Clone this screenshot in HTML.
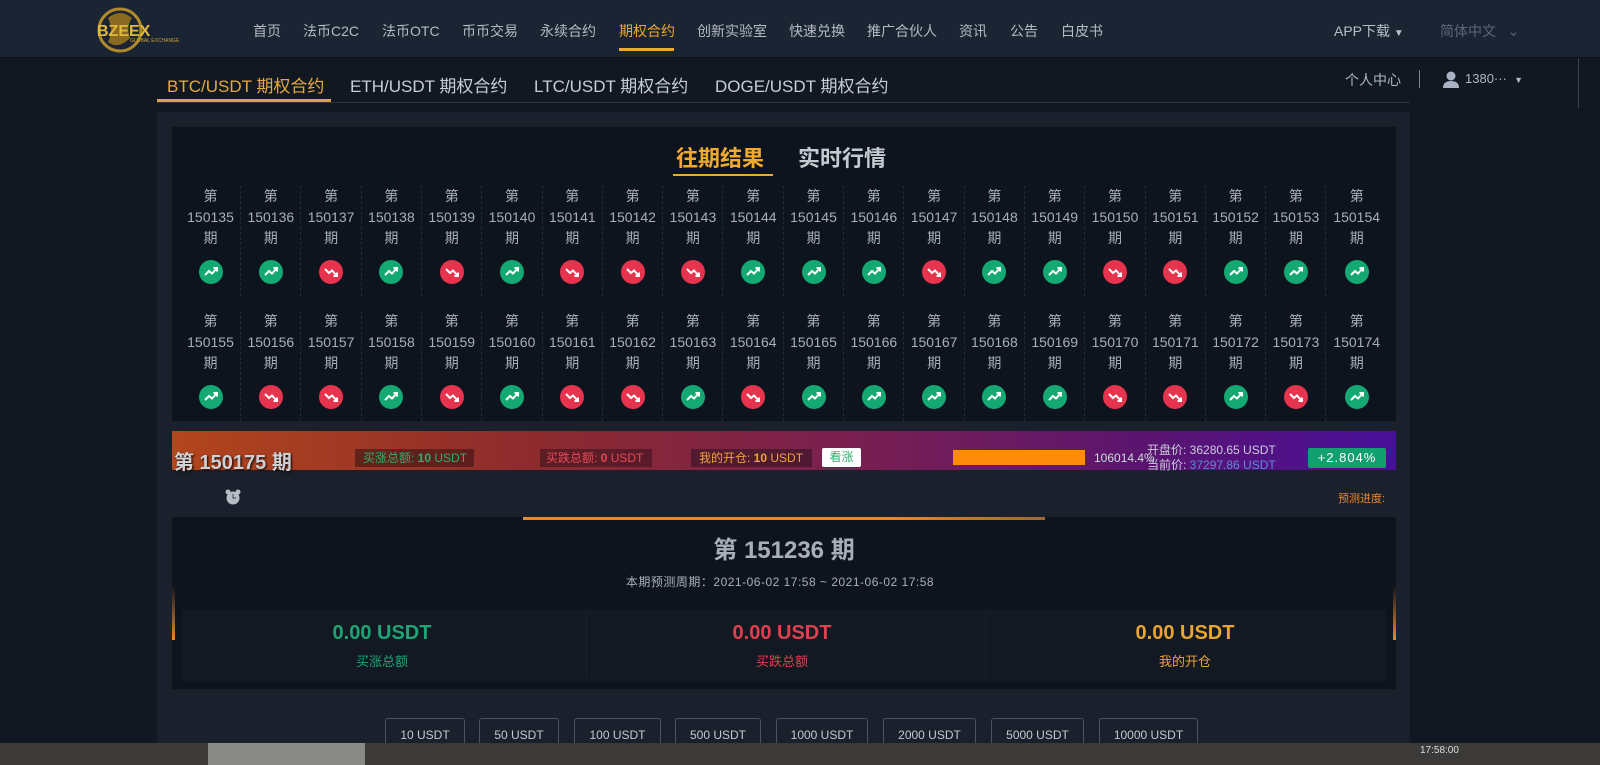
<!DOCTYPE html>
<html><head><meta charset="utf-8">
<style>
*{margin:0;padding:0;box-sizing:border-box}
body{width:1600px;height:765px;overflow:hidden;background:#111822;font-family:"Liberation Sans","Noto Sans CJK SC",sans-serif;position:relative;color:#c8ccd4}
.a{position:absolute}
.hdr{left:0;top:0;width:1600px;height:58px;background:#1b2433;border-bottom:1px solid #0c1118}
.nav{top:21px;font-size:14px;color:#b4bac6}
.nav span{position:absolute;white-space:nowrap}
.cont{left:157px;top:112px;width:1253px;height:640px;background:#1a212d}
.panel{left:172px;top:127px;width:1224px;height:294px;background:#0e141d}
.cell{position:absolute;width:60px;text-align:center;font-size:14px;line-height:21px;color:#a9aeb8;border-right:1px dashed #232b38;height:110px}
.ic{display:block;width:24px;height:24px;border-radius:50%;margin:11px auto 0}
.u{background:#14a872}.d{background:#e6334e}
.btn{position:absolute;top:718px;height:30px;border:1px solid #4a5363;border-bottom:none;border-radius:3px 3px 0 0;font-size:12px;color:#c4c8d0;text-align:center;line-height:32px}
</style></head><body>
<svg width="0" height="0" style="position:absolute"><defs>
<symbol id="up" viewBox="0 0 24 24"><path d="M6 15 L10 11 L13 13.5 L18 8 M14.5 8 H18 V11.5" fill="none" stroke="#fff" stroke-width="2"/></symbol>
<symbol id="dn" viewBox="0 0 24 24"><path d="M6 9 L10 13 L13 10.5 L18 16 M14.5 16 H18 V12.5" fill="none" stroke="#fff" stroke-width="2"/></symbol>
</defs></svg>
<div class="a hdr"></div>
<svg class="a" style="left:96px;top:4px" width="100" height="52" viewBox="0 0 100 52">
<circle cx="24" cy="26" r="21" fill="none" stroke="#b08a2a" stroke-width="3"/>
<path d="M12 14 Q24 4 36 14 Q30 22 34 34 Q22 46 12 38 Q18 26 12 14Z" fill="#8a6a20"/>
<text x="1" y="32" font-family="Liberation Sans" font-weight="bold" font-size="16" fill="#e2b93a">BZEEX</text>
<text x="34" y="38" font-family="Liberation Sans" font-size="5" fill="#c9a43a">GLOBAL EXCHANGE</text>
</svg>
<div class="a nav" style="left:0;width:1600px">
<span style="left:253px">首页</span><span style="left:303px">法币C2C</span><span style="left:382px">法币OTC</span><span style="left:462px">币币交易</span><span style="left:540px">永续合约</span><span style="left:619px;color:#f0a92e">期权合约</span><span style="left:697px">创新实验室</span><span style="left:789px">快速兑换</span><span style="left:867px">推广合伙人</span><span style="left:959px">资讯</span><span style="left:1010px">公告</span><span style="left:1061px">白皮书</span>
<span style="left:1334px;color:#b8bfcc">APP下载 <span style="position:static;font-size:10px">▼</span></span>
<span style="left:1440px;color:#5c6678">简体中文 &nbsp;&nbsp;⌄</span>
</div>
<div class="a" style="left:619px;top:48px;width:55px;height:3px;background:#f0a92e"></div>
<div class="a" style="left:157px;top:102px;width:1253px;height:1px;background:#2b3442"></div>
<div class="a" style="left:157px;top:99px;width:174px;height:3px;background:#d9a24a"></div>
<div class="a" style="top:72px;left:0;font-size:17px;color:#c9ced6;white-space:nowrap">
<span class="a" style="left:167px;color:#e8a93c">BTC/USDT 期权合约</span><span class="a" style="left:350px">ETH/USDT 期权合约</span><span class="a" style="left:534px">LTC/USDT 期权合约</span><span class="a" style="left:715px">DOGE/USDT 期权合约</span></div>
<div class="a" style="left:1345px;top:70px;font-size:14px;color:#b0b6c2">个人中心</div>
<div class="a" style="left:1419px;top:70px;width:1px;height:18px;background:#7b8290"></div>
<svg class="a" style="left:1442px;top:71px" width="18" height="17" viewBox="0 0 18 17"><circle cx="9" cy="5" r="4.5" fill="#aab3c4"/><path d="M1 17 Q1 10 9 10 Q17 10 17 17Z" fill="#aab3c4"/></svg>
<div class="a" style="left:1465px;top:71px;font-size:13px;color:#b0b6c2">1380··· &nbsp;<span style="font-size:9px">▼</span></div>
<div class="a" style="left:1578px;top:58px;width:1px;height:50px;background:#3a4250"></div>

<div class="a cont"></div>
<div class="a panel"></div>
<div class="a" style="left:676px;top:141px;font-size:22px;font-weight:bold;color:#f0a92e">往期结果</div>
<div class="a" style="left:673px;top:174px;width:100px;height:2px;background:#f0a92e"></div>
<div class="a" style="left:798px;top:141px;font-size:22px;font-weight:bold;color:#c5c9d0">实时行情</div>

<div class="a" style="left:181px;top:186px;width:1210px;height:240px">
<div class="cell" style="left:0;top:0">第<br>150135<br>期<svg class="ic u"><use href="#up"/></svg></div>
<div class="cell" style="left:60.3px;top:0">第<br>150136<br>期<svg class="ic u"><use href="#up"/></svg></div>
<div class="cell" style="left:120.6px;top:0">第<br>150137<br>期<svg class="ic d"><use href="#dn"/></svg></div>
<div class="cell" style="left:180.9px;top:0">第<br>150138<br>期<svg class="ic u"><use href="#up"/></svg></div>
<div class="cell" style="left:241.2px;top:0">第<br>150139<br>期<svg class="ic d"><use href="#dn"/></svg></div>
<div class="cell" style="left:301.5px;top:0">第<br>150140<br>期<svg class="ic u"><use href="#up"/></svg></div>
<div class="cell" style="left:361.8px;top:0">第<br>150141<br>期<svg class="ic d"><use href="#dn"/></svg></div>
<div class="cell" style="left:422.1px;top:0">第<br>150142<br>期<svg class="ic d"><use href="#dn"/></svg></div>
<div class="cell" style="left:482.4px;top:0">第<br>150143<br>期<svg class="ic d"><use href="#dn"/></svg></div>
<div class="cell" style="left:542.7px;top:0">第<br>150144<br>期<svg class="ic u"><use href="#up"/></svg></div>
<div class="cell" style="left:603px;top:0">第<br>150145<br>期<svg class="ic u"><use href="#up"/></svg></div>
<div class="cell" style="left:663.3px;top:0">第<br>150146<br>期<svg class="ic u"><use href="#up"/></svg></div>
<div class="cell" style="left:723.6px;top:0">第<br>150147<br>期<svg class="ic d"><use href="#dn"/></svg></div>
<div class="cell" style="left:783.9px;top:0">第<br>150148<br>期<svg class="ic u"><use href="#up"/></svg></div>
<div class="cell" style="left:844.2px;top:0">第<br>150149<br>期<svg class="ic u"><use href="#up"/></svg></div>
<div class="cell" style="left:904.5px;top:0">第<br>150150<br>期<svg class="ic d"><use href="#dn"/></svg></div>
<div class="cell" style="left:964.8px;top:0">第<br>150151<br>期<svg class="ic d"><use href="#dn"/></svg></div>
<div class="cell" style="left:1025.1px;top:0">第<br>150152<br>期<svg class="ic u"><use href="#up"/></svg></div>
<div class="cell" style="left:1085.4px;top:0">第<br>150153<br>期<svg class="ic u"><use href="#up"/></svg></div>
<div class="cell" style="left:1145.7px;top:0;border:none">第<br>150154<br>期<svg class="ic u"><use href="#up"/></svg></div>
<div class="cell" style="left:0;top:125px">第<br>150155<br>期<svg class="ic u"><use href="#up"/></svg></div>
<div class="cell" style="left:60.3px;top:125px">第<br>150156<br>期<svg class="ic d"><use href="#dn"/></svg></div>
<div class="cell" style="left:120.6px;top:125px">第<br>150157<br>期<svg class="ic d"><use href="#dn"/></svg></div>
<div class="cell" style="left:180.9px;top:125px">第<br>150158<br>期<svg class="ic u"><use href="#up"/></svg></div>
<div class="cell" style="left:241.2px;top:125px">第<br>150159<br>期<svg class="ic d"><use href="#dn"/></svg></div>
<div class="cell" style="left:301.5px;top:125px">第<br>150160<br>期<svg class="ic u"><use href="#up"/></svg></div>
<div class="cell" style="left:361.8px;top:125px">第<br>150161<br>期<svg class="ic d"><use href="#dn"/></svg></div>
<div class="cell" style="left:422.1px;top:125px">第<br>150162<br>期<svg class="ic d"><use href="#dn"/></svg></div>
<div class="cell" style="left:482.4px;top:125px">第<br>150163<br>期<svg class="ic u"><use href="#up"/></svg></div>
<div class="cell" style="left:542.7px;top:125px">第<br>150164<br>期<svg class="ic d"><use href="#dn"/></svg></div>
<div class="cell" style="left:603px;top:125px">第<br>150165<br>期<svg class="ic u"><use href="#up"/></svg></div>
<div class="cell" style="left:663.3px;top:125px">第<br>150166<br>期<svg class="ic u"><use href="#up"/></svg></div>
<div class="cell" style="left:723.6px;top:125px">第<br>150167<br>期<svg class="ic u"><use href="#up"/></svg></div>
<div class="cell" style="left:783.9px;top:125px">第<br>150168<br>期<svg class="ic u"><use href="#up"/></svg></div>
<div class="cell" style="left:844.2px;top:125px">第<br>150169<br>期<svg class="ic u"><use href="#up"/></svg></div>
<div class="cell" style="left:904.5px;top:125px">第<br>150170<br>期<svg class="ic d"><use href="#dn"/></svg></div>
<div class="cell" style="left:964.8px;top:125px">第<br>150171<br>期<svg class="ic d"><use href="#dn"/></svg></div>
<div class="cell" style="left:1025.1px;top:125px">第<br>150172<br>期<svg class="ic u"><use href="#up"/></svg></div>
<div class="cell" style="left:1085.4px;top:125px">第<br>150173<br>期<svg class="ic d"><use href="#dn"/></svg></div>
<div class="cell" style="left:1145.7px;top:125px;border:none">第<br>150174<br>期<svg class="ic u"><use href="#up"/></svg></div>
</div>

<div class="a" style="left:172px;top:431px;width:1224px;height:39px;background:linear-gradient(90deg,#b2461c 0%,#8c2a2e 30%,#7a2050 55%,#5a1470 80%,#48109a 100%)"></div>
<div class="a" style="left:174px;top:446px;font-size:20px;font-weight:bold;color:#cfd0d4;text-shadow:1px 1px 2px #000">第 150175 期</div>
<div class="a" style="left:355px;top:449px;width:119px;height:18px;background:rgba(60,20,20,.6);font-size:12px;line-height:18px;padding-left:8px;color:#2fae6c">买涨总额: <b>10</b> USDT</div>
<div class="a" style="left:540px;top:449px;width:112px;height:18px;background:rgba(60,20,30,.6);font-size:12px;line-height:18px;padding-left:6px;color:#e84a56">买跌总额: <b>0</b> USDT</div>
<div class="a" style="left:691px;top:449px;width:121px;height:18px;background:rgba(50,20,35,.6);font-size:12px;line-height:18px;padding-left:8px;color:#f0a23e">我的开仓: <b>10</b> USDT</div>
<div class="a" style="left:822px;top:448px;width:39px;height:19px;background:#fff;border-radius:2px;font-size:12px;line-height:19px;text-align:center;color:#2fae6c">看涨</div>
<div class="a" style="left:953px;top:450px;width:132px;height:15px;background:#ff8a0c"></div>
<div class="a" style="left:1094px;top:451px;font-size:12px;color:#cdd">106014.4%</div>
<div class="a" style="left:1147px;top:443px;font-size:12px;color:#ccd;line-height:15px">开盘价: 36280.65 USDT<br>当前价: <span style="color:#5c8cd0">37297.86 USDT</span></div>
<div class="a" style="left:1308px;top:448px;width:78px;height:20px;background:#12a070;border-radius:2px;font-size:13px;color:#fff;text-align:center;line-height:20px;letter-spacing:1px">+2.804%</div>

<svg class="a" style="left:224px;top:488px" width="18" height="18" viewBox="0 0 18 18"><circle cx="9" cy="10" r="6.5" fill="#b5bcc6"/><circle cx="4" cy="4" r="2.5" fill="#b5bcc6"/><circle cx="14" cy="4" r="2.5" fill="#b5bcc6"/><path d="M9 6 V10 H12" stroke="#555" stroke-width="1.2" fill="none"/></svg>
<div class="a" style="left:1338px;top:490px;font-size:11px;color:#e88a2e">预测进度:</div>

<div class="a" style="left:172px;top:517px;width:1224px;height:172px;background:#0e141d"></div>
<div class="a" style="left:523px;top:517px;width:522px;height:3px;background:linear-gradient(90deg,#e8892c,#e8892c 70%,#a06830)"></div>
<div class="a" style="left:172px;top:585px;width:3px;height:55px;background:linear-gradient(#0e141d,#e8892c)"></div>
<div class="a" style="left:1393px;top:585px;width:3px;height:55px;background:linear-gradient(#0e141d,#e8892c)"></div>
<div class="a" style="left:0;width:1568px;top:530px;text-align:center;font-size:24px;font-weight:bold;color:#a9aeb8">第 151236 期</div>
<div class="a" style="left:0;width:1560px;top:573px;text-align:center;font-size:12px;color:#aab0ba;letter-spacing:.5px">本期预测周期：2021-06-02 17:58 ~ 2021-06-02 17:58</div>
<div class="a" style="left:182px;top:609px;width:1204px;height:72px;background:#121923"></div>
<div class="a" style="left:586px;top:612px;width:1px;height:66px;background:#1a222e"></div>
<div class="a" style="left:985px;top:612px;width:1px;height:66px;background:#1a222e"></div>
<div class="a" style="left:182px;width:400px;top:622px;text-align:center;font-size:20px;font-weight:bold;color:#1fa474">0.00 USDT</div>
<div class="a" style="left:182px;width:400px;top:651px;text-align:center;font-size:13px;color:#1fa474">买涨总额</div>
<div class="a" style="left:582px;width:400px;top:622px;text-align:center;font-size:20px;font-weight:bold;color:#e0404e">0.00 USDT</div>
<div class="a" style="left:582px;width:400px;top:651px;text-align:center;font-size:13px;color:#e0404e">买跌总额</div>
<div class="a" style="left:985px;width:400px;top:622px;text-align:center;font-size:20px;font-weight:bold;color:#e8a530">0.00 USDT</div>
<div class="a" style="left:985px;width:400px;top:651px;text-align:center;font-size:13px;color:#e8a530">我的开仓</div>

<div class="btn" style="left:385px;width:80px">10 USDT</div>
<div class="btn" style="left:479px;width:80px">50 USDT</div>
<div class="btn" style="left:574px;width:87px">100 USDT</div>
<div class="btn" style="left:675px;width:86px">500 USDT</div>
<div class="btn" style="left:776px;width:92px">1000 USDT</div>
<div class="btn" style="left:883px;width:93px">2000 USDT</div>
<div class="btn" style="left:991px;width:93px">5000 USDT</div>
<div class="btn" style="left:1099px;width:99px">10000 USDT</div>

<div class="a" style="left:0;top:743px;width:1600px;height:22px;background:#3b3a38"></div>
<div class="a" style="left:208px;top:743px;width:157px;height:22px;background:#8a8a88"></div>
<div class="a" style="left:1420px;top:745px;font-size:10px;color:#ddd">17:58:00</div>
</body></html>
